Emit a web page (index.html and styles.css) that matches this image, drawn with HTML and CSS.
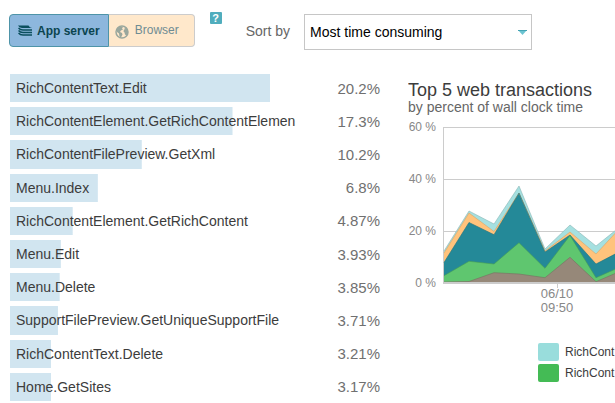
FILE: index.html
```html
<!DOCTYPE html>
<html lang="en">
<head>
<meta charset="utf-8">
<title>Web transactions</title>
<link rel="stylesheet" href="styles.css">
</head>
<body>
<header class="toolbar">
  <div class="toggle">
    <button class="toggle-item active" type="button">
      <svg class="icon" width="15" height="11" viewBox="0 0 15 11" aria-hidden="true">
        <path d="M0 .5h10.500q1 2 3.500 2.500H4Q1 2.500 0 .5z" fill="#0b4f5e"/>
        <path d="M.5 3Q2 5 5 5h9M.5 5.500Q2 7.500 5 7.500h9M.5 8Q2 10 5 10h9" fill="none" stroke="#0b4f5e" stroke-width="1.400"/>
      </svg>
      App server
    </button>
    <button class="toggle-item" type="button">
      <svg class="icon" width="14" height="14" viewBox="0 0 14 14" aria-hidden="true">
        <circle cx="7" cy="7" r="6" fill="none" stroke="#9aa79d" stroke-width="1.500"/>
        <path d="M2 4l3-2.500 3 .5-1 1.500 1 1-2 1-1 1.500 2 1 .5 1.500-1.500 3-1.500-1L4 8.500 2 7zM9 3l2-.5 2 3v3l-1.500 2-1.500-1-.5-2-1-1 .5-2 1.500-.5z" fill="#9aa79d"/>
      </svg>
      Browser
    </button>
  </div>
  <button class="help" type="button">?</button>
  <label class="sort-label" for="sort">Sort by</label>
  <div class="select-box">
    <select id="sort"><option>Most time consuming</option></select>
    <svg class="arrow" width="9" height="5" viewBox="0 0 9 5" aria-hidden="true"><path d="M0 0h9L4.500 5z" fill="#6cc4d2"/><path d="M0 .5h9" stroke="#43a3b3"/></svg>
  </div>
</header>
<main class="content">
  <table class="transactions">
    <tbody>
      <tr><td class="name" style="background-size:90% 100%">RichContentText.Edit</td><td class="share">20.2%</td></tr>
      <tr><td class="name" style="background-size:77% 100%">RichContentElement.GetRichContentElemen</td><td class="share">17.3%</td></tr>
      <tr><td class="name" style="background-size:45.6% 100%">RichContentFilePreview.GetXml</td><td class="share">10.2%</td></tr>
      <tr><td class="name" style="background-size:30.4% 100%">Menu.Index</td><td class="share">6.8%</td></tr>
      <tr><td class="name" style="background-size:21.7% 100%">RichContentElement.GetRichContent</td><td class="share">4.87%</td></tr>
      <tr><td class="name" style="background-size:17.6% 100%">Menu.Edit</td><td class="share">3.93%</td></tr>
      <tr><td class="name" style="background-size:17.2% 100%">Menu.Delete</td><td class="share">3.85%</td></tr>
      <tr><td class="name" style="background-size:16.6% 100%">SupportFilePreview.GetUniqueSupportFile</td><td class="share">3.71%</td></tr>
      <tr><td class="name" style="background-size:14.3% 100%">RichContentText.Delete</td><td class="share">3.21%</td></tr>
      <tr><td class="name" style="background-size:14.2% 100%">Home.GetSites</td><td class="share">3.17%</td></tr>
    </tbody>
  </table>
  <section class="panel">
    <h2 class="title">Top 5 web transactions</h2>
    <p class="subtitle">by percent of wall clock time</p>
    <div class="chart">
      <div class="y-axis"><span>60 %</span><span>40 %</span><span>20 %</span><span>0 %</span></div>
      <svg class="plot" width="100%" height="161" aria-hidden="true">
        <path d="M0 .5H2000M0 52.500H2000M0 104.500H2000M.5 0V156" fill="none" stroke="#ccc"/>
        <path d="M1 124L26 84L51 97L76 59L102 122L127 98L153 119L178 99V155H1z" fill="#a5e0e0"/>
        <path d="M1 126L26 86L51 104.500L76 66L102 124L127 105L153 127L178 100V155H1z" fill="#ffc37c"/>
        <path d="M1 135.500L26 95.500L51 107.700L76 66L102 125L127 108L153 137L178 124V155H1z" fill="#248998"/>
        <path d="M1 148.700L26 134.300L51 137L76 115.700L102 141.300L127 108.500L153 150.700L178 139.700V155H1z" fill="#5fc66f"/>
        <path d="M1 155L26 154.500L51 145.700L76 147L102 150.700L127 130.300L153 154.700L178 144V155z" fill="#968879"/>
        <g fill="none" stroke-width="1" stroke-opacity=".6">
          <path d="M1 124L26 84L51 97L76 59L102 122L127 98L153 119L178 99" stroke="#8bb5b5"/>
          <path d="M1 126L26 86L51 104.500L76 66L102 124L127 105L153 127L178 100" stroke="#d8a568"/>
          <path d="M1 135.500L26 95.500L51 107.700L76 66L102 125L127 108L153 137L178 124" stroke="#1d7380"/>
          <path d="M1 148.700L26 134.300L51 137L76 115.700L102 141.300L127 108.500L153 150.700L178 139.700" stroke="#469c55"/>
          <path d="M1 155L26 154.500L51 145.700L76 147L102 150.700L127 130.300L153 154.700L178 144" stroke="#7a6e62"/>
        </g>
        <path d="M0 156H2000" stroke="#ccc" stroke-width="2"/>
        <path d="M114.500 157v4" stroke="#ccc"/>
      </svg>
      <div class="x-label">06/10<br>09:50</div>
    </div>
    <ul class="legend">
      <li><span class="swatch aqua"></span>RichCont</li>
      <li><span class="swatch green"></span>RichCont</li>
    </ul>
  </section>
</main>
</body>
</html>
```
FILE: styles.css
```css
* {
  box-sizing: border-box;
}

body {
  margin: 0;
  padding: 14px 0 0 10px;
  background: #fff;
  color: #3c3c3c;
  font-family: "Liberation Sans", Arial, sans-serif;
  font-size: 14px;
  overflow: hidden;
}

button,
select {
  font: inherit;
  margin: 0;
}

.toolbar {
  display: flex;
  align-items: flex-start;
  height: 60px;
}

.toggle {
  display: flex;
  margin-left: -1px;
}

.toggle-item {
  display: flex;
  align-items: center;
  gap: 6px;
  height: 33px;
  padding: 0 15px 2px 6px;
  border: 1px solid #ccc;
  border-left: 0;
  border-radius: 0 4px 4px 0;
  background: #ffe8cb;
  color: #6f8c93;
  font-size: 12px;
}

.toggle-item.active {
  gap: 4px;
  padding: 0 8px;
  border: 1px solid #4e94a8;
  border-radius: 4px 0 0 4px;
  background: #8db7dd;
  color: #0b4550;
  font-weight: bold;
}

.icon {
  flex: none;
}

.toggle-item:not(.active) .icon {
  margin-top: 4px;
}

.help {
  width: 12px;
  height: 12px;
  margin: -2px 0 0 15px;
  padding: 0;
  border: 0;
  border-radius: 1px;
  background: #50adbd;
  color: #fff;
  font-size: 11px;
  font-weight: bold;
  line-height: 12px;
}

.sort-label {
  margin: 0 14px 0 24px;
  color: #666;
  line-height: 34px;
}

.select-box {
  position: relative;
  flex: 0 1 228px;
}

.select-box select {
  appearance: none;
  width: 100%;
  height: 36px;
  padding: 0 24px 0 5px;
  border: 1px solid #c6c6c6;
  border-radius: 0;
  background: #fff;
  color: #000;
}

.arrow {
  position: absolute;
  top: 16px;
  right: 5px;
  pointer-events: none;
}

.content {
  display: grid;
  grid-template-columns: minmax(0, 370fr) minmax(0, 207fr);
  column-gap: 28px;
  align-items: start;
}

.transactions {
  width: 100%;
  height: 337px;
  margin-top: -5px;
  table-layout: fixed;
  border-collapse: separate;
  border-spacing: 0 5px;
}

.transactions td {
  height: 28px;
  padding: 0;
}

.transactions .name {
  width: 78%;
  padding-left: 6px;
  overflow: hidden;
  white-space: nowrap;
  background: linear-gradient(#d1e5f0, #d1e5f0) no-repeat;
}

.transactions .share {
  color: #707070;
  font-size: 15px;
  text-align: right;
}

.panel {
  min-width: 0;
  padding-top: 6px;
  overflow: hidden;
}

.title {
  margin: 0;
  font-size: 18px;
  font-weight: normal;
  line-height: 20px;
  white-space: nowrap;
}

.subtitle {
  margin: 0;
  color: #666;
  font-size: 14px;
  line-height: 14px;
  white-space: nowrap;
}

.chart {
  display: grid;
  grid-template-columns: 28px minmax(0, 1fr);
  column-gap: 7px;
  padding-top: 5px;
  color: #888;
}

.y-axis {
  display: flex;
  flex-direction: column;
  justify-content: space-between;
  height: 172px;
  font-size: 12px;
  line-height: 16px;
  text-align: right;
  white-space: nowrap;
}

.plot {
  display: block;
  margin-top: 8px;
}

.x-label {
  grid-column: 2;
  width: 60px;
  margin: -4px 0 0 84px;
  font-size: 13px;
  line-height: 14px;
  text-align: center;
}

.legend {
  display: grid;
  gap: 3px;
  margin: 28px 0 0 130px;
  padding: 0;
  list-style: none;
  font-size: 12px;
  white-space: nowrap;
}

.legend li {
  display: flex;
  align-items: center;
  gap: 6px;
}

.swatch {
  width: 21px;
  height: 18px;
  border-radius: 2px;
}

.aqua {
  background: #99dddc;
}

.green {
  background: #44bb55;
}
```
